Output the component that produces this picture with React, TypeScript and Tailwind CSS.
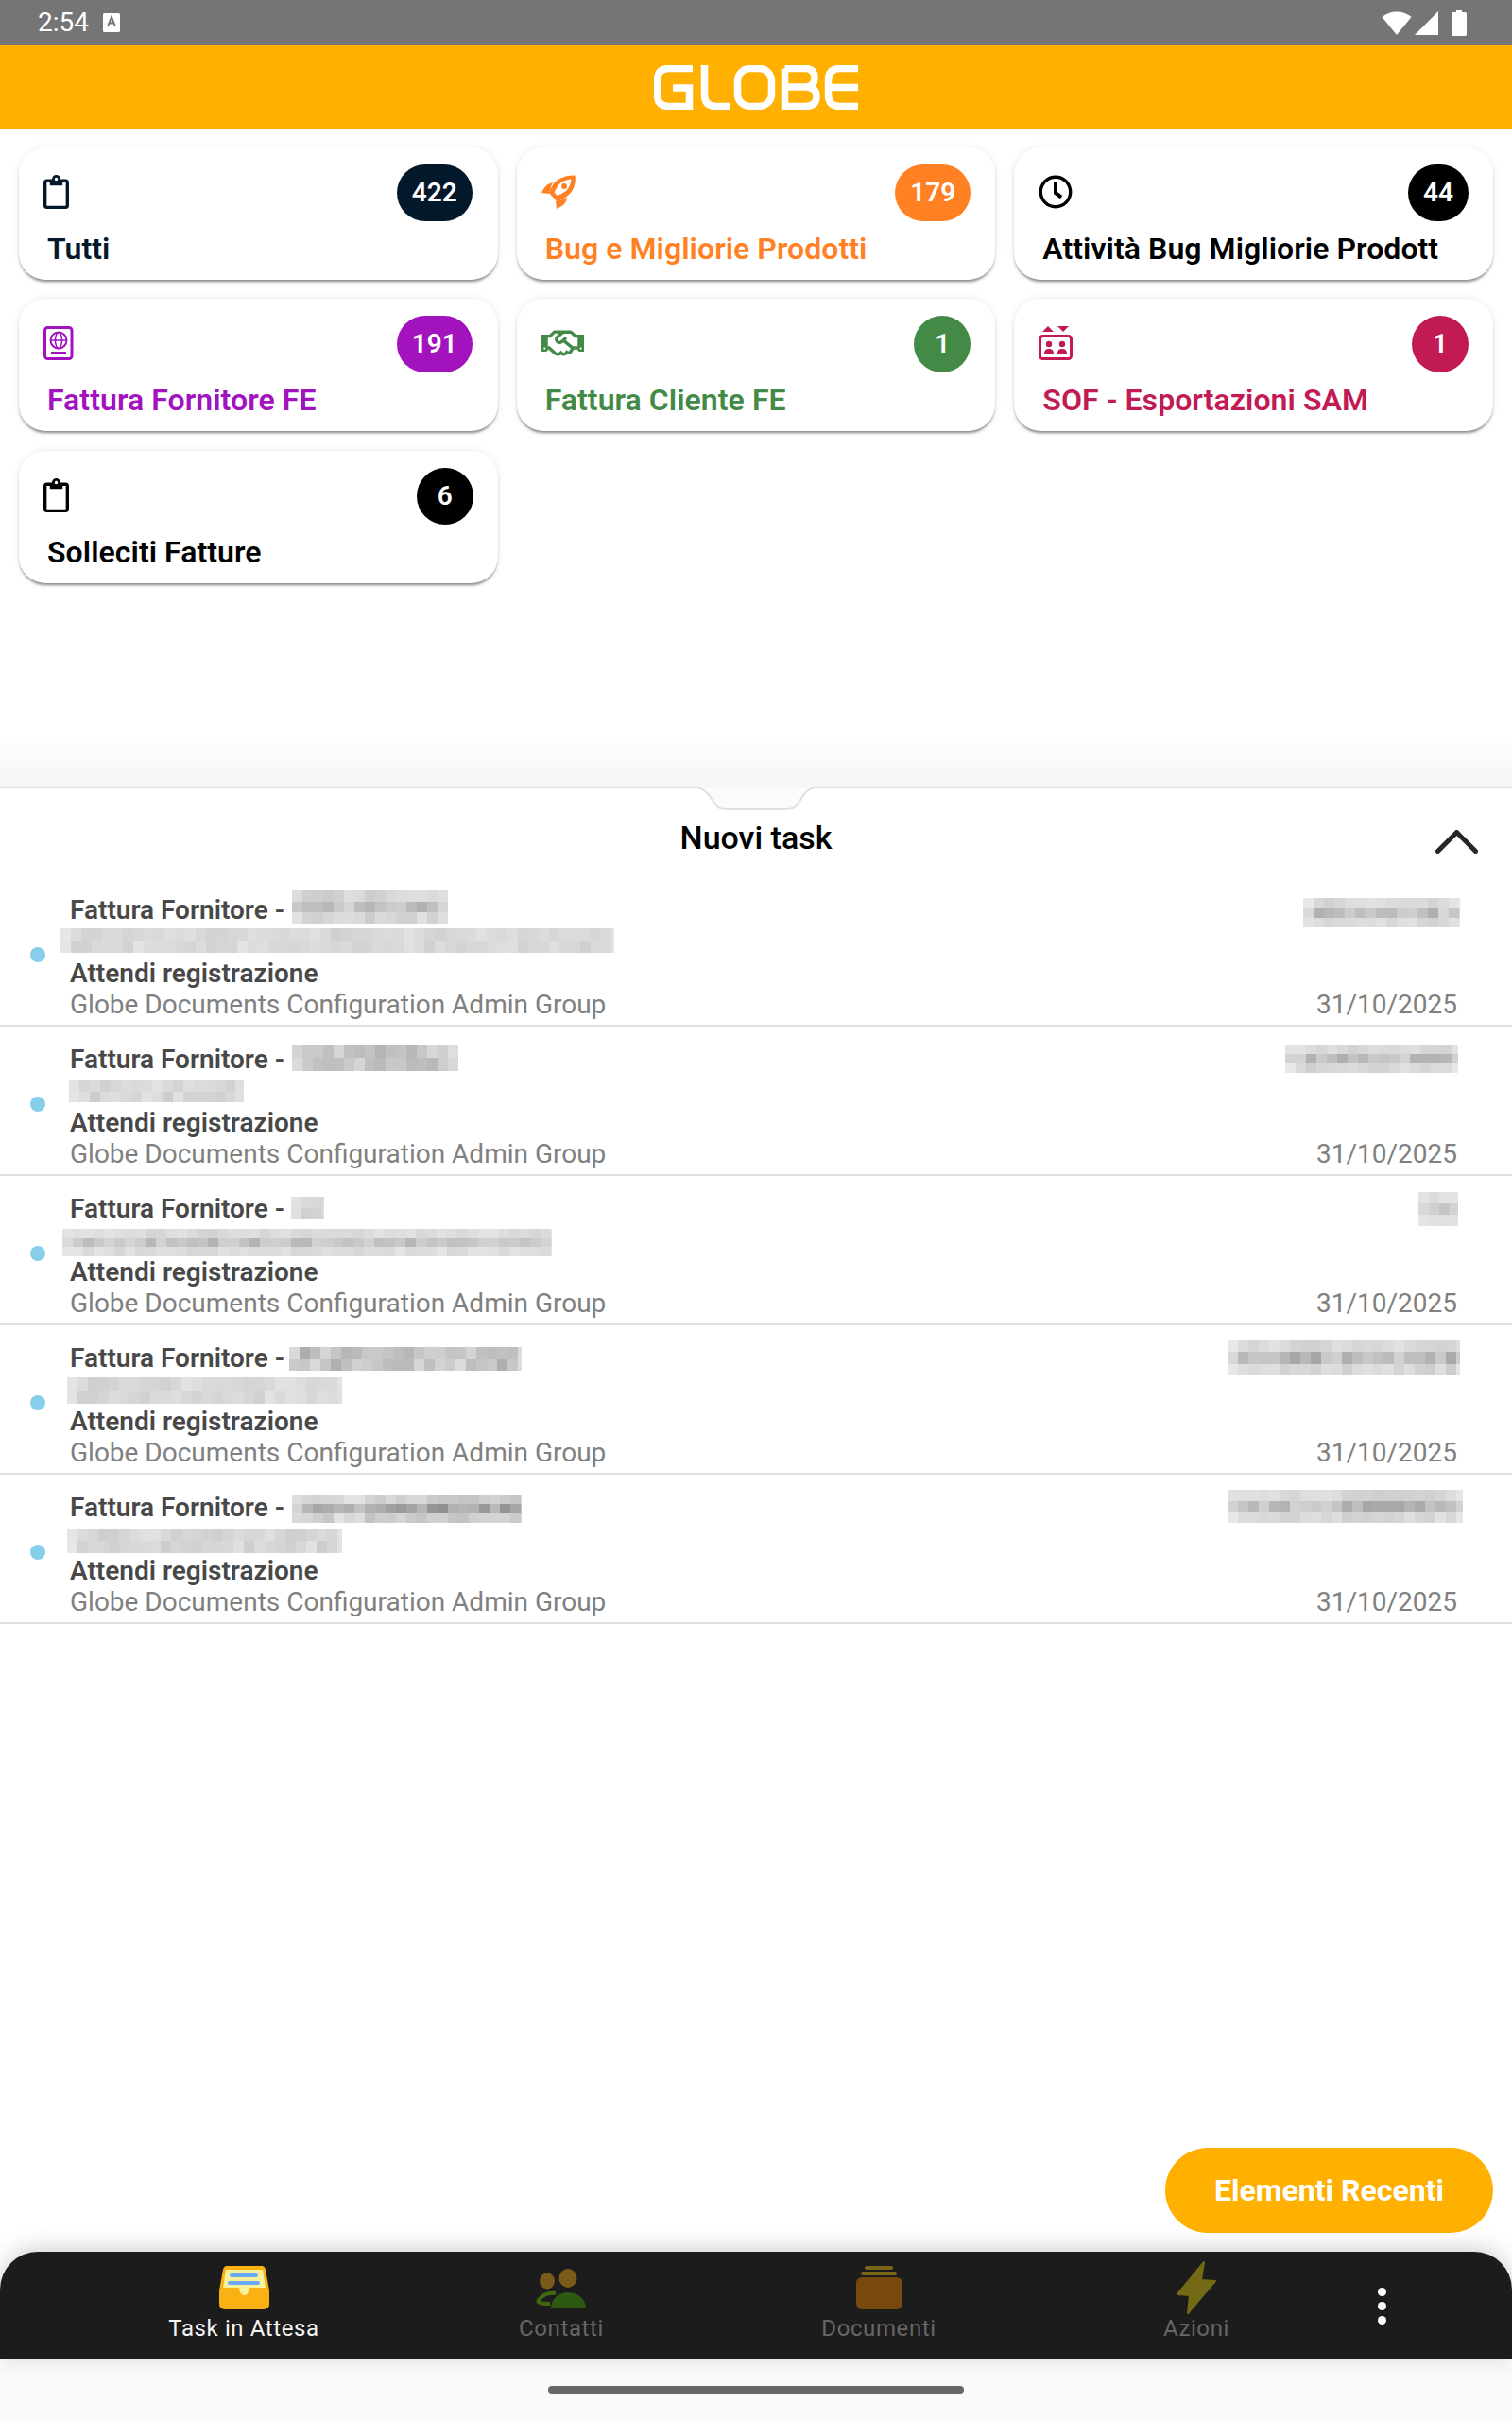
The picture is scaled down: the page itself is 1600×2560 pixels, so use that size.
import React from 'react';
import { FaRegClipboard, FaRegClock, FaRegHandshake } from 'react-icons/fa';

const ROBOTO = "font-['Roboto',sans-serif]";

function GlobeLogo() {
  return (
    <svg width="216" height="47" viewBox="0 0 216 47" fill="none" stroke="#fff" strokeWidth="7.5">
      <path d="M41 3.5H16Q3.5 3.5 3.5 16V31Q3.5 43.5 16 43.5H37.5V24H20" />
      <path d="M53.5 0V31Q53.5 43.5 66 43.5H80" />
      <rect x="88.5" y="3.5" width="36" height="40" rx="13" />
      <path d="M138.5 3.5H160Q170 3.5 170 13Q170 23 160 23H142M160 23Q172 23 172 33Q172 43.5 160 43.5H138.5V3.5" />
      <path d="M216 3.5H197Q184.5 3.5 184.5 16V31Q184.5 43.5 197 43.5H216M186 23.5H216" />
    </svg>
  );
}

function RocketIcon() {
  return (
    <svg width="36" height="36" viewBox="0 0 36 36" fill="#ff8124">
      <path
        fillRule="evenodd"
        d="M35.5 .5C27 0 18 3 13 9C11 12 9 15 8 19L16 28C21 27 26 24 30 20C35 14 36.5 8 35.5 .5ZM31.5 4.5C26 5 21 7 18 11C16 14 14.5 16 13.5 18.5L16.5 22C19 21 23 19 26 17C29.5 13.5 31 9.5 31.5 4.5Z"
      />
      <circle cx="24" cy="12" r="3" />
      <path d="M12 8C7 9 3 12 0 19L8 20C9 16 10 12 12 8Z" />
      <path d="M27 24C27 29 23 33 16 36L15 28C19 27 23 26 27 24Z" />
    </svg>
  );
}

function PassportIcon() {
  return (
    <svg width="32" height="36" viewBox="0 0 32 36" fill="none" stroke="#a213bd">
      <rect x="1.5" y="1.5" width="28.5" height="33" rx="3" strokeWidth="3" />
      <circle cx="16" cy="15" r="8.5" strokeWidth="2" />
      <ellipse cx="16" cy="15" rx="3.5" ry="8.5" strokeWidth="1.5" />
      <path d="M7.5 15H24.5" strokeWidth="1.5" />
      <path d="M8 28H24" strokeWidth="2" />
    </svg>
  );
}

function ElevatorIcon() {
  return (
    <svg width="36" height="36" viewBox="0 0 36 36" fill="#c21a53">
      <path d="M10 0L16 6H4Z" />
      <path d="M20 0H32L26 6Z" />
      <rect x="1.5" y="10.5" width="33" height="24" rx="3" fill="none" stroke="#c21a53" strokeWidth="3" />
      <circle cx="11" cy="19" r="3.2" />
      <circle cx="25" cy="19" r="3.2" />
      <path d="M6 29Q6 24 11 24Q16 24 16 29Z" />
      <path d="M20 29Q20 24 25 24Q30 24 30 29Z" />
    </svg>
  );
}

const cards = [
  { title: 'Tutti', count: '422', color: 'text-[#04182b]', badge: 'bg-[#04182b] w-[80px] mr-[1px]', icon: <FaRegClipboard className="w-[27px] h-[36px] text-[#04182b]" /> },
  { title: 'Bug e Migliorie Prodotti', count: '179', color: 'text-[#ff8124]', badge: 'bg-[#ff8124] w-[80px]', icon: <RocketIcon /> },
  { title: 'Attività Bug Migliorie Prodott', count: '44', color: 'text-black', badge: 'bg-black w-[64px]', icon: <FaRegClock className="w-[36px] h-[36px] text-black" /> },
  { title: 'Fattura Fornitore FE', count: '191', color: 'text-[#a213bd]', badge: 'bg-[#a213bd] w-[80px] mr-[1px]', icon: <PassportIcon /> },
  { title: 'Fattura Cliente FE', count: '1', color: 'text-[#438a46]', badge: 'bg-[#438a46] w-[60px]', icon: <FaRegHandshake className="w-[45px] h-[36px] text-[#438a46]" /> },
  { title: 'SOF - Esportazioni SAM', count: '1', color: 'text-[#c21a53]', badge: 'bg-[#c21a53] w-[60px]', icon: <ElevatorIcon /> },
  { title: 'Solleciti Fatture', count: '6', color: 'text-black', badge: 'bg-black w-[60px]', icon: <FaRegClipboard className="w-[27px] h-[36px] text-black" /> },
];

// redacted patches over the task rows, positions relative to each row
type Patch = { left: number; top: number; w: number; h: number; dark: number };

const tasks: Patch[][] = [
  [
    { left: 309, top: 14, w: 165, h: 35, dark: 90 },
    { left: 64, top: 54, w: 586, h: 26, dark: 50 },
    { left: 1379, top: 22, w: 166, h: 31, dark: 70 },
  ],
  [
    { left: 309, top: 19, w: 176, h: 28, dark: 130 },
    { left: 73, top: 57, w: 185, h: 23, dark: 60 },
    { left: 1360, top: 19, w: 183, h: 30, dark: 80 },
  ],
  [
    { left: 308, top: 22, w: 35, h: 23, dark: 80 },
    { left: 66, top: 56, w: 518, h: 29, dark: 60 },
    { left: 1501, top: 17, w: 42, h: 36, dark: 70 },
  ],
  [
    { left: 306, top: 23, w: 246, h: 25, dark: 130 },
    { left: 71, top: 55, w: 291, h: 28, dark: 60 },
    { left: 1299, top: 16, w: 246, h: 37, dark: 80 },
  ],
  [
    { left: 309, top: 21, w: 243, h: 30, dark: 120 },
    { left: 71, top: 57, w: 291, h: 26, dark: 60 },
    { left: 1299, top: 16, w: 249, h: 35, dark: 75 },
  ],
];

function noiseAt(c: number, r: number, seed: number) {
  return Math.abs(Math.sin((c + 1) * 12.9898 + (r + 1) * 78.233 + seed * 37.7) * 43758.5453) % 1;
}

function Mosaic({ left, top, w, h, dark, seed }: Patch & { seed: number }) {
  const cols = Math.ceil(w / 11);
  const rows = Math.max(2, Math.round(h / 11.5));
  const cells = [];
  for (let r = 0; r < rows; r++) {
    // middle rows carry the text, the outer ones only bleed
    const mid = Math.abs(r - (rows - 1) / 2) / Math.max(1, rows / 2);
    for (let c = 0; c < cols; c++) {
      const noise = noiseAt(c, r, seed) * 0.6 + noiseAt(c + 1, 0, seed) * 0.4;
      const edge = c === 0 || c === cols - 1 ? 0.55 : 1;
      const tone = (1 - mid * 0.8) * edge;
      const g = Math.round(240 - (12 + dark * 0.7 * (0.2 + noise)) * tone);
      cells.push(
        <rect key={`${r}-${c}`} x={c * 11} y={(r * h) / rows} width="11" height={h / rows + 0.5} fill={`rgb(${g},${g},${g})`} />
      );
    }
  }
  return (
    <svg
      className="absolute"
      style={{ left, top }}
      width={w}
      height={h}
      viewBox={`0 0 ${w} ${h}`}
      shapeRendering="crispEdges"
    >
      {cells}
    </svg>
  );
}

function TaskRow({ patches, index }: { patches: Patch[]; index: number }) {
  return (
    <div className="relative flex h-[158px] border-b-2 border-[#e0e0e0] bg-white">
      <div className="flex w-[74px] shrink-0 items-center pl-[32px] pt-[8px]">
        <div className="h-4 w-4 rounded-full bg-[#87ceeb]" />
      </div>
      <div className="flex flex-1 flex-col pt-[18px] text-[28px] leading-[33.5px]">
        <div className="font-semibold text-[#484848]">Fattura Fornitore -</div>
        <div className="h-[33.5px]" />
        <div className="font-semibold text-[#484848]">Attendi registrazione</div>
        <div className="-mt-[1px] text-[#808080]">Globe Documents Configuration Admin Group</div>
      </div>
      <div className="self-end pb-[5px] pr-[58px] text-[28px] leading-[33.5px] text-[#808080]">31/10/2025</div>
      {patches.map((p, i) => (
        <Mosaic key={i} {...p} seed={index * 3 + i + 1} />
      ))}
    </div>
  );
}

function NavItem({ label, active, children }: { label: string; active?: boolean; children: React.ReactNode }) {
  return (
    <div className="flex w-[336px] flex-col items-center">
      <div className="flex h-[67px] items-end pb-[6px]">{children}</div>
      <div className={`text-[24px] leading-[28px] tracking-[0.6px] ${active ? 'text-[#f5f5f5]' : 'text-[#666666]'}`}>{label}</div>
    </div>
  );
}

export default function App() {
  return (
    <div className={`relative flex h-[2560px] w-[1600px] flex-col overflow-hidden bg-white ${ROBOTO}`}>
      {/* Status bar */}
      <div className="flex h-12 items-center justify-between bg-[#757575] pl-10 pr-[48px]">
        <div className="flex items-center gap-[15px]">
          <span className="text-[28px] leading-none text-white">2:54</span>
          <svg width="18" height="20" viewBox="0 0 18 20">
            <rect width="18" height="20" rx="1.5" fill="#fff" />
            <path d="M5 14L9 4L13 14M6.5 10.5H11.5" fill="none" stroke="#757575" strokeWidth="2" />
          </svg>
        </div>
        <div className="flex items-center">
          <svg width="32" height="25" viewBox="0 0 32 25" fill="#fff">
            <path d="M16 25L0.5 6C4.5 2.5 10 0.5 16 0.5C22 0.5 27.5 2.5 31.5 6Z" />
          </svg>
          <svg className="ml-[3px]" width="25" height="25" viewBox="0 0 25 25" fill="#fff">
            <path d="M25 0V25H0Z" />
          </svg>
          <svg className="ml-[14px]" width="16" height="27" viewBox="0 0 16 27" fill="#fff">
            <path d="M5 0H11V2H14.5Q16 2 16 3.5V25.5Q16 27 14.5 27H1.5Q0 27 0 25.5V3.5Q0 2 1.5 2H5Z" />
          </svg>
        </div>
      </div>

      {/* Header */}
      <div className="flex h-[88px] items-center justify-center bg-[#ffb000]">
        <GlobeLogo />
      </div>

      {/* Category cards */}
      <div className="h-[696px] bg-gradient-to-b from-white from-[92%] to-[#f5f5f5]">
        <div className="grid grid-cols-3 gap-x-5 gap-y-[20.25px] px-5 pt-5">
          {cards.map((card) => (
            <div
              key={card.title}
              className="h-[140px] overflow-hidden rounded-[28px] bg-white pt-[18px] shadow-[0_3px_3px_-1px_rgba(0,0,0,0.45),0_0_8px_rgba(0,0,0,0.08)]"
            >
              <div className="flex h-[60px] items-center justify-between pl-[26px] pr-[26px]">
                <div className="pb-[2px]">{card.icon}</div>
                <div className={`flex h-[60px] items-center justify-center rounded-full text-[28px] font-semibold text-white ${card.badge}`}>
                  {card.count}
                </div>
              </div>
              <div className={`mt-[6px] whitespace-nowrap pl-[30px] text-[32px] font-semibold leading-[46px] tracking-[0.06px] ${card.color}`}>
                {card.title}
              </div>
            </div>
          ))}
        </div>
      </div>

      {/* New tasks panel */}
      <div className="relative flex-1 border-t-2 border-[#e0e0e0] bg-white">
        <svg className="absolute left-[720px] top-[-2px]" width="160" height="26" viewBox="0 0 160 26">
          <path
            d="M0 1H15C25 1 30 8 35 16C39 23 42 24 50 24H110C118 24 122 23 126 16C130 8 135 1 145 1H160V0H0Z"
            fill="#fbfbfb"
          />
          <path
            d="M0 1H15C25 1 30 8 35 16C39 23 42 24 50 24H110C118 24 122 23 126 16C130 8 135 1 145 1H160"
            fill="none"
            stroke="#e0e0e0"
            strokeWidth="2"
          />
        </svg>
        <div className="relative flex h-[94px] items-center justify-center pt-[10px]">
          <span className="text-[34px] font-medium text-black">Nuovi task</span>
          <svg className="absolute left-[1519px] top-[44px]" width="45" height="25" viewBox="0 0 45 25" fill="none" stroke="#262626" strokeWidth="5" strokeLinecap="round" strokeLinejoin="round">
            <path d="M2.5 22.5L22.5 2.5L42.5 22.5" />
          </svg>
        </div>
        {tasks.map((patches, i) => (
          <TaskRow key={i} patches={patches} index={i} />
        ))}
      </div>

      {/* Floating button */}
      <div className="absolute left-[1233px] top-[2272px] flex h-[90px] w-[347px] items-center justify-center rounded-full bg-[#ffb000] text-[32px] font-bold text-white">
        Elementi Recenti
      </div>

      {/* Bottom nav */}
      <div className="relative flex h-[114px] rounded-t-[40px] bg-[#1c1c1c] pl-[90px] shadow-[0_-4px_24px_rgba(0,0,0,0.18)]">
        <NavItem label="Task in Attesa" active>
          <svg width="53" height="46" viewBox="0 0 53 46">
            <path d="M8 0H45Q48 0 49 4L53 26V40Q53 46 46 46H7Q0 46 0 40V26L4 4Q5 0 8 0Z" fill="#f9b211" />
            <path d="M7 4H46L49 23H33C31 23 32 31 26.5 31C21 31 22 23 20 23H4Z" fill="#f8f09a" />
            <rect x="11" y="8" width="30" height="4" rx="2" fill="#6aaaf5" />
            <rect x="9" y="16" width="34" height="4" rx="2" fill="#6aaaf5" />
          </svg>
        </NavItem>
        <NavItem label="Contatti">
          <svg className="-ml-[3px]" width="57" height="43" viewBox="0 0 57 43">
            <ellipse cx="15" cy="13" rx="8" ry="8.5" fill="#7a5a18" />
            <ellipse cx="37" cy="10" rx="9.5" ry="10" fill="#7a5a18" />
            <path d="M24 26Q13 24 6 33Q3 37 18 37" fill="none" stroke="#3f6b10" strokeWidth="4" />
            <path d="M19 42C19 32 27 25 37 25C47 25 56 32 56 42Z" fill="#2d5a10" />
          </svg>
        </NavItem>
        <NavItem label="Documenti">
          <svg width="49" height="46" viewBox="0 0 49 46">
            <rect x="9" y="0" width="30" height="4" rx="2" fill="#7a6616" />
            <rect x="5" y="6" width="38" height="4" rx="2" fill="#7a6616" />
            <rect x="0" y="12" width="49" height="34" rx="6" fill="#78490f" />
          </svg>
        </NavItem>
        <NavItem label="Azioni">
          <svg className="-mb-[5px]" width="42" height="56" viewBox="0 0 42 56" fill="#746a16" stroke="#746a16" strokeWidth="2" strokeLinejoin="round">
            <path d="M29 1L1 35L14 36L12 55L41 21L26 20Z" />
          </svg>
        </NavItem>
        <div className="flex w-[56px] flex-col items-center gap-[6px] pt-[38px]">
          <div className="h-[9px] w-[9px] rounded-full bg-white" />
          <div className="h-[9px] w-[9px] rounded-full bg-white" />
          <div className="h-[9px] w-[9px] rounded-full bg-white" />
        </div>
      </div>

      {/* Gesture bar */}
      <div className="flex h-[64px] items-start justify-center bg-[#fafafa] pt-[28px]">
        <div className="h-2 w-[440px] rounded-full bg-[#666666]" />
      </div>
    </div>
  );
}
